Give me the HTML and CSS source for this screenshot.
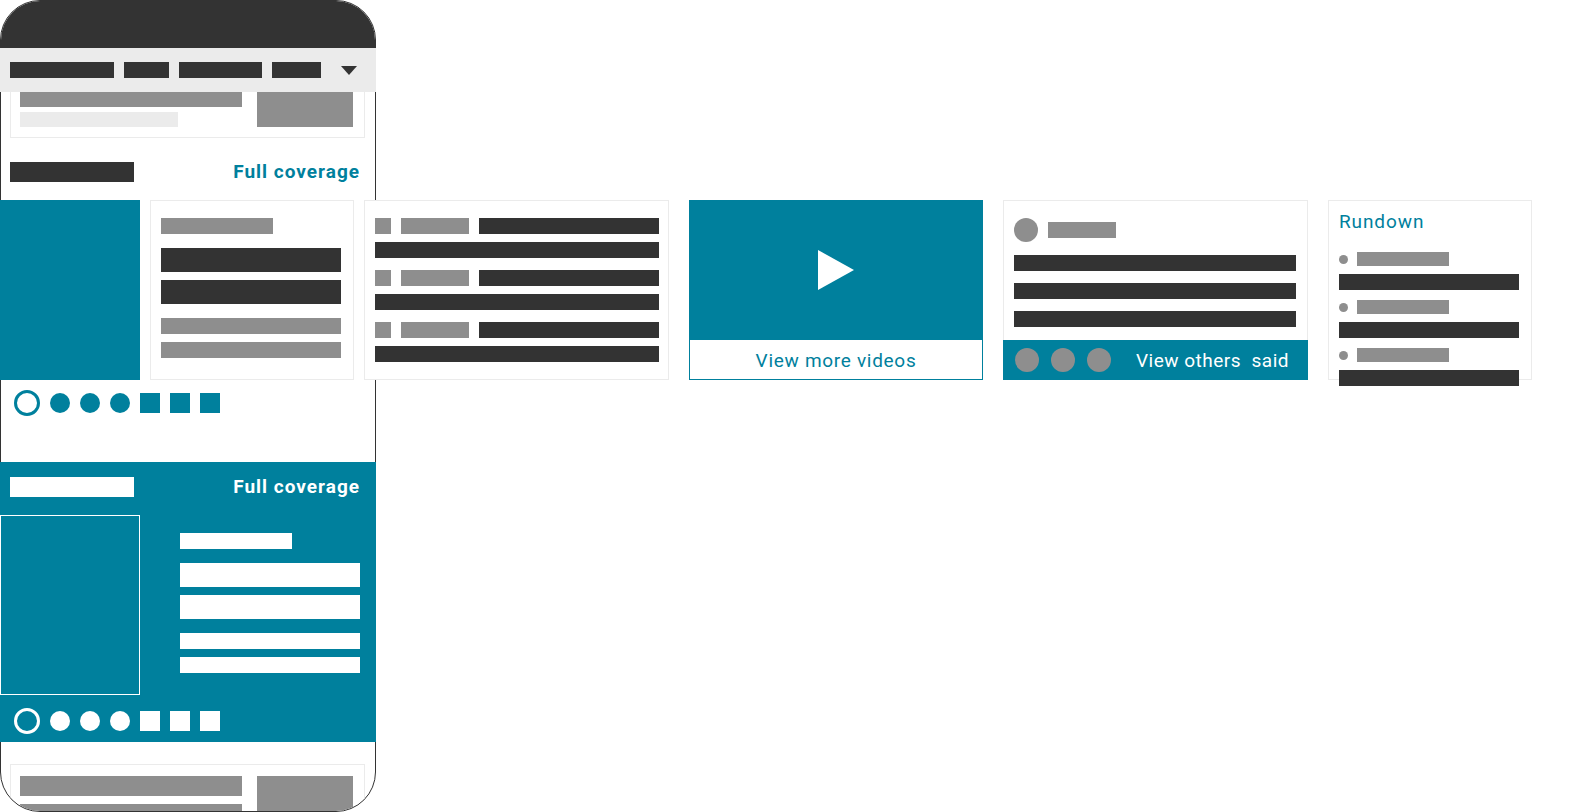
FILE: index.html
```html
<!DOCTYPE html>
<html lang="en">

<head>
    <meta charset="UTF-8">
    <meta name="viewport" content="width=device-width, initial-scale=1.0">
    <title>Full coverage | Wireframe</title>
    <link rel="stylesheet" href="styles.css">
</head>

<body>
    <div class="phone">
        <div class="phone-top"></div>

        <nav class="tabs">
            <span class="tab tab-1"></span>
            <span class="tab tab-2"></span>
            <span class="tab tab-3"></span>
            <span class="tab tab-4"></span>
            <span class="tab-more"></span>
        </nav>

        <div class="story story-cut">
            <div class="story-text">
                <span class="ln ln-gray cut-title"></span>
                <span class="ln ln-light cut-src"></span>
            </div>
            <span class="story-thumb"></span>
        </div>

        <section class="cluster">
            <div class="cluster-head">
                <span class="ln ln-dark head-bar"></span>
                <a href="#" class="cluster-link">Full coverage</a>
            </div>

            <div class="carousel">
                <div class="hero-img"></div>

                <div class="card card-lead">
                    <div class="lead">
                        <span class="ln ln-gray lead-kicker"></span>
                        <span class="ln ln-dark lead-head"></span>
                        <span class="ln ln-dark lead-head"></span>
                        <span class="ln ln-gray lead-snip"></span>
                        <span class="ln ln-gray lead-snip"></span>
                    </div>
                </div>

                <div class="card card-list">
                    <div class="list-item">
                        <div class="list-row">
                            <span class="ln ln-gray list-icon"></span>
                            <span class="ln ln-gray list-src"></span>
                            <span class="ln ln-dark list-head"></span>
                        </div>
                        <span class="ln ln-dark list-line"></span>
                    </div>
                    <div class="list-item">
                        <div class="list-row">
                            <span class="ln ln-gray list-icon"></span>
                            <span class="ln ln-gray list-src"></span>
                            <span class="ln ln-dark list-head"></span>
                        </div>
                        <span class="ln ln-dark list-line"></span>
                    </div>
                    <div class="list-item">
                        <div class="list-row">
                            <span class="ln ln-gray list-icon"></span>
                            <span class="ln ln-gray list-src"></span>
                            <span class="ln ln-dark list-head"></span>
                        </div>
                        <span class="ln ln-dark list-line"></span>
                    </div>
                </div>

                <div class="card card-video">
                    <div class="video-frame">
                        <svg width="36" height="40" viewBox="0 0 36 40">
                            <polygon points="0,0 36,20 0,40" fill="#fff" />
                        </svg>
                    </div>
                    <a href="#" class="video-more">View more videos</a>
                </div>

                <div class="card card-quotes">
                    <div class="quote-body">
                        <div class="quote-author">
                            <span class="avatar"></span>
                            <span class="ln ln-gray quote-name"></span>
                        </div>
                        <span class="ln ln-dark quote-line"></span>
                        <span class="ln ln-dark quote-line"></span>
                        <span class="ln ln-dark quote-line"></span>
                    </div>
                    <div class="quote-foot">
                        <span class="avatar"></span>
                        <span class="avatar"></span>
                        <span class="avatar"></span>
                        <a href="#" class="quote-more">View others&nbsp; said</a>
                    </div>
                </div>

                <div class="card card-rundown">
                    <h3 class="rundown-title">Rundown</h3>
                    <div class="rd-item">
                        <div class="rd-src"><span class="rd-dot"></span><span class="ln ln-gray rd-name"></span></div>
                        <span class="ln ln-dark rd-line"></span>
                    </div>
                    <div class="rd-item">
                        <div class="rd-src"><span class="rd-dot"></span><span class="ln ln-gray rd-name"></span></div>
                        <span class="ln ln-dark rd-line"></span>
                    </div>
                    <div class="rd-item">
                        <div class="rd-src"><span class="rd-dot"></span><span class="ln ln-gray rd-name"></span></div>
                        <span class="ln ln-dark rd-line"></span>
                    </div>
                </div>
            </div>

            <div class="pager">
                <span class="pg-ring"></span>
                <span class="pg-dot"></span>
                <span class="pg-dot"></span>
                <span class="pg-dot"></span>
                <span class="pg-sq"></span>
                <span class="pg-sq"></span>
                <span class="pg-sq"></span>
            </div>
        </section>

        <section class="cluster cluster-teal">
            <div class="cluster-head">
                <span class="ln head-bar"></span>
                <a href="#" class="cluster-link">Full coverage</a>
            </div>

            <div class="teal-body">
                <div class="teal-img"></div>
                <div class="lead lead-inv">
                    <span class="ln lead-kicker"></span>
                    <span class="ln lead-head"></span>
                    <span class="ln lead-head"></span>
                    <span class="ln lead-snip"></span>
                    <span class="ln lead-snip"></span>
                </div>
            </div>

            <div class="pager">
                <span class="pg-ring"></span>
                <span class="pg-dot"></span>
                <span class="pg-dot"></span>
                <span class="pg-dot"></span>
                <span class="pg-sq"></span>
                <span class="pg-sq"></span>
                <span class="pg-sq"></span>
            </div>
        </section>

        <div class="phone-bottom">
            <div class="story">
                <div class="story-text">
                    <span class="ln ln-gray bottom-title"></span>
                    <span class="ln ln-gray bottom-title"></span>
                </div>
                <span class="story-thumb bottom-thumb"></span>
            </div>
        </div>
    </div>
</body>

</html>
```

FILE: styles.css
```css
:root {
    --teal: #00809d;
    --dark: #333333;
    --gray: #8e8e8e;
    --light: #ebebeb;
    --white: #ffffff;
}

* {
    margin: 0;
    padding: 0;
    box-sizing: border-box;
}

body {
    font-family: Roboto, 'Noto Sans', sans-serif;
    background-color: var(--white);
    height: 812px;
    overflow: hidden;
}

a {
    text-decoration: none;
}

.ln {
    display: block;
    flex-shrink: 0;
}

.ln-dark {
    background-color: var(--dark);
}

.ln-gray {
    background-color: var(--gray);
}

.ln-light {
    background-color: var(--light);
}

/* phone frame */

.phone {
    width: 376px;
    height: 812px;
    border: 1px solid var(--dark);
    border-radius: 40px;
    display: flex;
    flex-direction: column;
}

.phone-top {
    height: 47px;
    flex-shrink: 0;
    background-color: var(--dark);
    border-radius: 39px 39px 0 0;
}

.tabs {
    position: relative;
    z-index: 2;
    display: flex;
    align-items: center;
    gap: 10px;
    height: 44px;
    flex-shrink: 0;
    margin: 0 -1px;
    padding: 0 19px 0 10px;
    background-color: var(--light);
}

.tab {
    height: 16px;
    background-color: var(--dark);
}

.tab-1 { width: 104px; }
.tab-2 { width: 45px; }
.tab-3 { width: 83px; }
.tab-4 { width: 49px; }

.tab-more {
    margin-left: auto;
    border-left: 8px solid transparent;
    border-right: 8px solid transparent;
    border-top: 9px solid var(--dark);
}

/* story rows */

.story {
    display: flex;
    justify-content: space-between;
    margin: 0 10px 0 9px;
    padding: 11px 11px 0 9px;
    border: 1px solid var(--light);
    flex-shrink: 0;
}

.story-cut {
    border-top: none;
    padding: 0 11px 10px 9px;
}

.story-thumb {
    width: 96px;
    background-color: var(--gray);
}

.cut-title {
    width: 222px;
    height: 15px;
    margin-bottom: 5px;
}

.cut-src {
    width: 158px;
    height: 15px;
}

.bottom-title {
    width: 222px;
    height: 20px;
    margin-bottom: 8px;
}

.bottom-thumb {
    height: 48px;
}

/* clusters */

.cluster {
    padding-top: 24px;
    flex-shrink: 0;
}

.cluster-head {
    display: flex;
    justify-content: space-between;
    align-items: center;
    height: 20px;
    padding: 0 16px 0 9px;
}

.head-bar {
    width: 124px;
    height: 20px;
}

.cluster-link {
    font-size: 19px;
    font-weight: 700;
    line-height: 20px;
    letter-spacing: 1px;
    margin-right: -1px;
    color: var(--teal);
}

.carousel {
    display: flex;
    height: 180px;
    margin: 18px 0 0 -1px;
}

.hero-img {
    width: 140px;
    flex-shrink: 0;
    background-color: var(--teal);
}

.card {
    flex-shrink: 0;
    background-color: var(--white);
    border: 1px solid var(--light);
}

.card-lead {
    width: 204px;
    margin-left: 10px;
    padding: 17px 10px;
}

.lead {
    display: flex;
    flex-direction: column;
}

.lead-kicker {
    width: 112px;
    height: 16px;
    margin-bottom: 14px;
}

.lead-head {
    width: 180px;
    height: 24px;
    margin-bottom: 8px;
}

.lead-head + .lead-head {
    margin-bottom: 14px;
}

.lead-snip {
    width: 180px;
    height: 16px;
    margin-bottom: 8px;
}

.lead-inv .ln {
    background-color: var(--white);
}

.card-list {
    width: 305px;
    margin-left: 10px;
    padding: 17px 9px 0 10px;
}

.list-item + .list-item {
    margin-top: 12px;
}

.list-row {
    display: flex;
    gap: 10px;
}

.list-icon {
    width: 16px;
    height: 16px;
}

.list-src {
    width: 68px;
    height: 16px;
}

.list-head {
    width: 180px;
    height: 16px;
}

.list-line {
    width: 284px;
    height: 16px;
    margin-top: 8px;
}

.card-video {
    width: 294px;
    margin-left: 20px;
    border: none;
    display: flex;
    flex-direction: column;
}

.video-frame {
    height: 140px;
    background-color: var(--teal);
    display: flex;
    align-items: center;
    justify-content: center;
}

.video-more {
    flex: 1;
    display: flex;
    align-items: center;
    justify-content: center;
    padding-top: 2px;
    border: 1px solid var(--teal);
    border-top: none;
    font-size: 19px;
    letter-spacing: 0.7px;
    color: var(--teal);
}

.card-quotes {
    width: 305px;
    margin-left: 20px;
    display: flex;
    flex-direction: column;
}

.quote-body {
    flex: 1;
    padding: 17px 11px 0 10px;
}

.quote-author {
    display: flex;
    align-items: center;
    gap: 10px;
    margin-bottom: 13px;
}

.avatar {
    width: 24px;
    height: 24px;
    border-radius: 50%;
    background-color: var(--gray);
    flex-shrink: 0;
}

.quote-name {
    width: 68px;
    height: 16px;
}

.quote-line {
    width: 282px;
    height: 16px;
    margin-bottom: 12px;
}

.quote-foot {
    height: 40px;
    margin: 0 -1px -1px;
    padding: 0 19px 0 12px;
    display: flex;
    align-items: center;
    gap: 12px;
    background-color: var(--teal);
}

.quote-more {
    margin-left: auto;
    font-size: 19px;
    letter-spacing: 0.5px;
    color: var(--white);
}

.card-rundown {
    width: 204px;
    margin-left: 20px;
    padding: 10px 12px 0 10px;
}

.rundown-title {
    font-size: 19px;
    font-weight: 400;
    line-height: 22px;
    letter-spacing: 0.9px;
    color: var(--teal);
    margin-bottom: 19px;
}

.rd-item + .rd-item {
    margin-top: 10px;
}

.rd-src {
    display: flex;
    align-items: center;
    gap: 9px;
}

.rd-dot {
    width: 9px;
    height: 9px;
    border-radius: 50%;
    background-color: var(--gray);
}

.rd-name {
    width: 92px;
    height: 14px;
}

.rd-line {
    width: 180px;
    height: 16px;
    margin-top: 8px;
}

/* pager */

.pager {
    display: flex;
    align-items: center;
    gap: 10px;
    height: 26px;
    margin: 10px 0 0 13px;
}

.pg-ring {
    width: 26px;
    height: 26px;
    border: 3px solid var(--teal);
    border-radius: 50%;
}

.pg-dot,
.pg-sq {
    width: 20px;
    height: 20px;
    background-color: var(--teal);
}

.pg-dot {
    border-radius: 50%;
}

/* teal cluster */

.cluster-teal {
    margin: 46px -1px 0;
    padding: 15px 1px 8px;
    background-color: var(--teal);
}

.cluster-teal .head-bar {
    background-color: var(--white);
}

.cluster-teal .cluster-link {
    color: var(--white);
}

.teal-body {
    display: flex;
    height: 180px;
    margin-top: 18px;
}

.teal-img {
    width: 140px;
    margin-left: -1px;
    border: 1px solid var(--white);
}

.lead-inv {
    margin-left: 40px;
    padding-top: 18px;
}

.cluster-teal .pager {
    margin-top: 13px;
}

.cluster-teal .pg-ring {
    border-color: var(--white);
}

.cluster-teal .pg-dot,
.cluster-teal .pg-sq {
    background-color: var(--white);
}

.phone-bottom {
    flex: 1;
    min-height: 0;
    padding-top: 22px;
    overflow: hidden;
    border-radius: 0 0 39px 39px;
}
```
